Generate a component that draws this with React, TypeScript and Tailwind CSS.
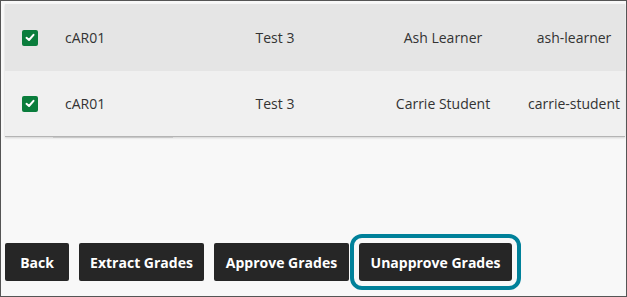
import React from "react";

function Check() {
  return (
    <div className="w-4 h-4 rounded-[2px] bg-[#0a7d3c] flex items-center justify-center">
      <svg width="10" height="9" viewBox="0 0 10 9" fill="none">
        <path d="M1.5 4.8 L4 7 L8.5 1.8" stroke="#fff" strokeWidth="2" strokeLinecap="round" strokeLinejoin="round" />
      </svg>
    </div>
  );
}

function Row({ name, user, bg, h }: { name: string; user: string; bg: string; h: string }) {
  return (
    <div className={`flex items-center ${bg} ${h} text-[14px] text-[#333333] whitespace-nowrap`}>
      <div className="w-[60px] pl-[17px] flex items-center">
        <Check />
      </div>
      <div className="w-[150px]">cAR01</div>
      <div className="w-[120px] text-center">Test 3</div>
      <div className="w-[48px]" />
      <div className="w-[120px] text-center">{name}</div>
      <div className="w-[21px]" />
      <div className="w-[100px] text-center">{user}</div>
    </div>
  );
}

export default function App() {
  const btn =
    "h-[38px] rounded-[2px] bg-[#262626] text-white text-[14px] font-bold flex items-center justify-center";
  return (
    <div
      className="w-[627px] h-[297px] border border-[#555555] bg-[#f8f8f8] flex flex-col overflow-hidden"
      style={{ fontFamily: '"Open Sans", "Noto Sans", sans-serif' }}
    >
      <div className="mt-[3px] ml-[4px] w-[620px] shadow-[0_1px_2px_rgba(0,0,0,0.15)] border-b border-[#b4b4b4]">
        <Row name="Ash Learner" user="ash-learner" bg="bg-[#e5e5e5]" h="h-[67px]" />
        <Row name="Carrie Student" user="carrie-student" bg="bg-[#f0f0f0]" h="h-[65px]" />
      </div>
      <div className="ml-[52px] w-[120px] h-px bg-[#c8c8c8]" />
      <div className="mt-auto mb-[15px] ml-[4px] flex gap-[10px]">
        <button className={`${btn} w-[64px]`}>Back</button>
        <button className={`${btn} w-[125px]`}>Extract Grades</button>
        <button className={`${btn} w-[135px]`}>Approve Grades</button>
        <button
          className={`${btn} w-[153px] outline-[4px] outline-solid outline-[#00819a] outline-offset-[5px] rounded-[3px]`}
        >
          Unapprove Grades
        </button>
      </div>
    </div>
  );
}
